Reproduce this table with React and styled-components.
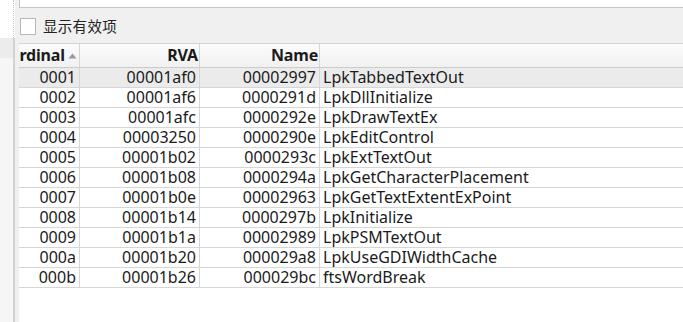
import React from "react";
import styled, { createGlobalStyle } from "styled-components";

const exportsList = [
  ["0001", "00001af0", "00002997", "LpkTabbedTextOut"],
  ["0002", "00001af6", "0000291d", "LpkDllInitialize"],
  ["0003", "00001afc", "0000292e", "LpkDrawTextEx"],
  ["0004", "00003250", "0000290e", "LpkEditControl"],
  ["0005", "00001b02", "0000293c", "LpkExtTextOut"],
  ["0006", "00001b08", "0000294a", "LpkGetCharacterPlacement"],
  ["0007", "00001b0e", "00002963", "LpkGetTextExtentExPoint"],
  ["0008", "00001b14", "0000297b", "LpkInitialize"],
  ["0009", "00001b1a", "00002989", "LpkPSMTextOut"],
  ["000a", "00001b20", "000029a8", "LpkUseGDIWidthCache"],
  ["000b", "00001b26", "000029bc", "ftsWordBreak"]
];

const GlobalStyle = createGlobalStyle`
  html, body {
    margin: 0;
    padding: 0;
    background: #ffffff;
  }
  body {
    font-family: "Noto Sans", "Noto Sans CJK SC", sans-serif;
    color: #1b1b1b;
  }
`;

const Root = styled.div`
  display: flex;
  width: 683px;
  height: 322px;
  overflow: hidden;
`;

const Strip = styled.div`
  width: 15px;
  display: flex;
  flex-direction: column;
  flex-shrink: 0;
`;

const StripTop = styled.div`
  height: 38px;
  background: #ffffff;
  border-right: 1px dotted #c4c4c4;
  margin-right: 1px;
`;

const StripBand = styled.div`
  height: 20px;
  background: #ececec;
  border-right: 2px solid #d2d2d2;
`;

const StripRest = styled.div`
  flex: 1;
  background: #f6f6f6;
  border-right: 2px solid #d2d2d2;
`;

const Panel = styled.div`
  flex: 1;
  display: flex;
  flex-direction: column;
  background: #f0f0f0;
  padding-left: 4px;
  min-width: 0;
`;

const InputBox = styled.div`
  height: 7px;
  background: #ffffff;
  border: 1px solid #c6c6c6;
  border-top: none;
  border-right: none;
`;

const CheckRow = styled.label`
  height: 35px;
  display: flex;
  align-items: center;
  gap: 7px;
  padding-left: 1px;
  font-family: "Noto Sans CJK SC", sans-serif;
  font-size: 14.5px;
  letter-spacing: 0.3px;
  color: #222;
`;

const CheckBox = styled.span`
  width: 14px;
  height: 15px;
  background: #ffffff;
  border: 1px solid #b8b8b8;
  box-sizing: content-box;
  margin-top: 1px;
`;

const Table = styled.div`
  flex: 1;
  background: #ffffff;
  border-top: 1px solid #d4d4d4;
  overflow: hidden;
`;

const Inner = styled.div`
  margin-left: -13px;
`;

const Row = styled.div`
  display: grid;
  grid-template-columns: 74px 120px 120px 1fr;
  height: ${p => (p.$head ? 23 : 19)}px;
  border-bottom: 1px solid ${p => (p.$head ? "#cbcbcb" : "#d6d6d6")};
  background: ${p =>
    p.$head
      ? "linear-gradient(#fbfbfb, #f1f1f1)"
      : p.$selected
      ? "#ebebeb"
      : "transparent"};
  font-size: 16px;
  font-weight: ${p => (p.$head ? 700 : 400)};
`;

const Cell = styled.div`
  display: flex;
  align-items: center;
  justify-content: ${p => (p.$left ? "flex-start" : "flex-end")};
  padding: ${p => (p.$left ? "0 0 0 3px" : p.$head ? "0 1px 0 0" : "0 3px 0 0")};
  border-right: ${p => (p.$last ? "none" : "1px solid #d6d6d6")};
  white-space: nowrap;
  line-height: 19px;
  letter-spacing: ${p => (p.$head ? "-0.2px" : "0")};
`;

const SortCell = styled(Cell)`
  justify-content: flex-start;
  padding: 0 0 0 1px;
`;

const SortArrow = () => (
  <svg width="9" height="6" viewBox="0 0 9 6" style={{ marginLeft: 3 }}>
    <polygon points="0.5,5.5 4.5,0.5 8.5,5.5" fill="#9a9a9a" />
  </svg>
);

export default function App() {
  return (
    <>
      <GlobalStyle />
      <Root>
        <Strip>
          <StripTop />
          <StripBand />
          <StripRest />
        </Strip>
        <Panel>
          <InputBox />
          <CheckRow>
            <CheckBox />
            显示有效项
          </CheckRow>
          <Table>
            <Inner>
              <Row $head>
                <SortCell $head>
                  Ordinal
                  <SortArrow />
                </SortCell>
                <Cell $head>RVA</Cell>
                <Cell $head>Name</Cell>
                <Cell $head $last />
              </Row>
              {exportsList.map((r, i) => (
                <Row key={r[0]} $selected={i === 0}>
                  <Cell>{r[0]}</Cell>
                  <Cell>{r[1]}</Cell>
                  <Cell>{r[2]}</Cell>
                  <Cell $left $last>
                    {r[3]}
                  </Cell>
                </Row>
              ))}
            </Inner>
          </Table>
        </Panel>
      </Root>
    </>
  );
}
